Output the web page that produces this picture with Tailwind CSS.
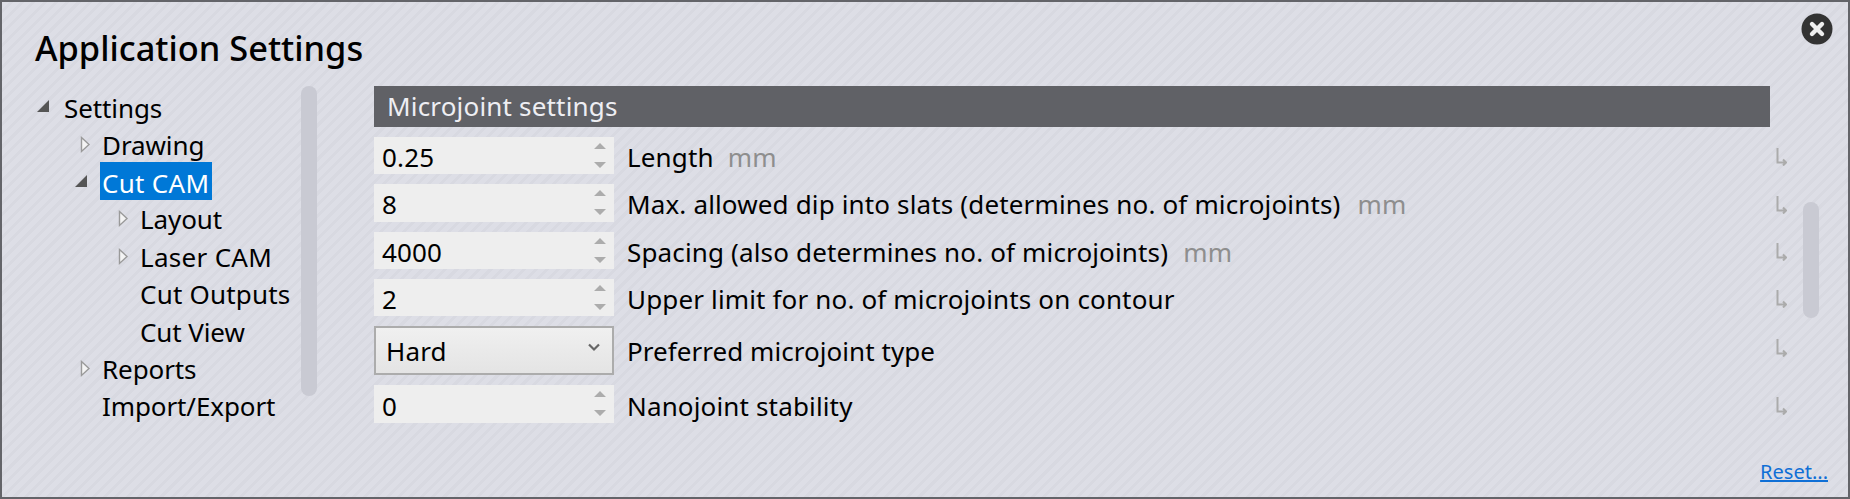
<!DOCTYPE html>
<html>
<head>
<meta charset="utf-8">
<script src="https://cdn.jsdelivr.net/npm/@tailwindcss/browser@4"></script>
</head>
<body class="m-0 overflow-hidden">
<div class="relative flex flex-col w-[1850px] h-[499px] border-2 border-[#636469] text-[26px] leading-[32px] text-black font-['Noto_Sans',sans-serif] bg-[#dddde5] bg-[repeating-linear-gradient(135deg,#dddee6_0px,#dddee6_5px,#d8d9e1_5px,#d8d9e1_8px)]">
  <div class="h-[84px] pl-[33px] pt-[24px] text-[34.4px] leading-[44px] font-medium">Application Settings</div>
  <button class="absolute top-[11px] right-[15px] w-[32px] h-[32px]">
    <svg width="32" height="32" viewBox="0 0 32 32"><circle cx="16" cy="16" r="15.5" fill="#333333"/><path d="M11 11 L21 21 M21 11 L11 21" stroke="#efefef" stroke-width="4.4" stroke-linecap="round"/></svg>
  </button>
  <div class="flex flex-1 items-start">
    <div class="w-[299px] pl-[35px] pt-[1.6px] tracking-[-0.1px]">
      <div class="flex items-center h-[37.4px]"><svg class="w-[25px] h-[38px]" viewBox="0 0 25 38"><path d="M12 13 V25 H0 Z" fill="#555"/></svg><span class="pl-[2px] pr-[4px] h-[38px] flex items-center pt-[3px]">Settings</span></div>
      <div class="flex items-center h-[37.4px] pl-[38px]"><svg class="w-[25px] h-[38px]" viewBox="0 0 25 38"><path d="M6.5 12.5 L14 19.5 L6.5 26.5 Z" fill="#f4f4f4" stroke="#9a9a9a" stroke-width="1.4"/></svg><span class="pl-[2px] pr-[4px] h-[38px] flex items-center pt-[3px]">Drawing</span></div>
      <div class="flex items-center h-[37.4px] pl-[38px]"><svg class="w-[25px] h-[38px]" viewBox="0 0 25 38"><path d="M12 13 V25 H0 Z" fill="#555"/></svg><span class="pl-[2px] pr-[3px] h-[38px] flex items-center pt-[3px] bg-[#0078d7] text-white tracking-[0.3px]">Cut CAM</span></div>
      <div class="flex items-center h-[37.4px] pl-[76px]"><svg class="w-[25px] h-[38px]" viewBox="0 0 25 38"><path d="M6.5 12.5 L14 19.5 L6.5 26.5 Z" fill="#f4f4f4" stroke="#9a9a9a" stroke-width="1.4"/></svg><span class="pl-[2px] pr-[4px] h-[38px] flex items-center pt-[2px]">Layout</span></div>
      <div class="flex items-center h-[37.4px] pl-[76px]"><svg class="w-[25px] h-[38px]" viewBox="0 0 25 38"><path d="M6.5 12.5 L14 19.5 L6.5 26.5 Z" fill="#f4f4f4" stroke="#9a9a9a" stroke-width="1.4"/></svg><span class="pl-[2px] pr-[4px] h-[38px] flex items-center pt-[2px] tracking-[0.3px]">Laser CAM</span></div>
      <div class="flex items-center h-[37.4px] pl-[101px]"><span class="pl-[2px] pr-[4px] h-[38px] flex items-center pt-[2px] tracking-[0.2px]">Cut Outputs</span></div>
      <div class="flex items-center h-[37.4px] pl-[101px]"><span class="pl-[2px] pr-[4px] h-[38px] flex items-center pt-[2px]">Cut View</span></div>
      <div class="flex items-center h-[37.4px] pl-[38px]"><svg class="w-[25px] h-[38px]" viewBox="0 0 25 38"><path d="M6.5 12.5 L14 19.5 L6.5 26.5 Z" fill="#f4f4f4" stroke="#9a9a9a" stroke-width="1.4"/></svg><span class="pl-[2px] pr-[4px] h-[38px] flex items-center pt-[2px]">Reports</span></div>
      <div class="flex items-center h-[37.4px] pl-[63px]"><span class="pl-[2px] pr-[4px] h-[38px] flex items-center pt-[2px]">Import/Export</span></div>
    </div>
    <div class="w-[16px] h-[310px] rounded-full bg-[#c9cad3]"></div>
    <div class="w-[1413px] ml-[57px] tracking-[0.15px]">
      <div class="w-[1396px] h-[41px] bg-[#606166] text-[#eeeef3] pl-[13px] pb-[2px] flex items-center mb-[10px] tracking-[0.18px]">Microjoint settings</div>
      <div class="flex items-center h-[37px] mb-[10px]">
        <div class="flex items-center justify-between w-[240px] h-full bg-[#eeeeee] pl-[8px] pr-[8px]"><span class="pt-[2px]">0.25</span><svg width="12" height="26" viewBox="0 0 12 26"><path d="M6 0 L12 6 H0 Z M0 19 H12 L6 25 Z" fill="#acacac"/></svg></div>
        <span class="ml-[13px] pt-[2px]">Length</span><span class="ml-[14px] pt-[2px] text-[#8e8e8e]">mm</span>
        <svg class="ml-auto mt-[3px]" width="11" height="18" viewBox="0 0 11 18"><path d="M1.5 0 V14.5 H9 M7 11.5 L10 14.5 L7 17.5" fill="none" stroke="#ababab" stroke-width="2"/></svg>
      </div>
      <div class="flex items-center h-[38px] mb-[10px]">
        <div class="flex items-center justify-between w-[240px] h-full bg-[#eeeeee] pl-[8px] pr-[8px]"><span class="pt-[2px]">8</span><svg width="12" height="26" viewBox="0 0 12 26"><path d="M6 0 L12 6 H0 Z M0 19 H12 L6 25 Z" fill="#acacac"/></svg></div>
        <span class="ml-[13px] pt-[2px]">Max. allowed dip into slats (determines no. of microjoints)</span><span class="ml-[17px] pt-[2px] text-[#8e8e8e]">mm</span>
        <svg class="ml-auto mt-[3px]" width="11" height="18" viewBox="0 0 11 18"><path d="M1.5 0 V14.5 H9 M7 11.5 L10 14.5 L7 17.5" fill="none" stroke="#ababab" stroke-width="2"/></svg>
      </div>
      <div class="flex items-center h-[37px] mb-[10px]">
        <div class="flex items-center justify-between w-[240px] h-full bg-[#eeeeee] pl-[8px] pr-[8px]"><span class="pt-[2px]">4000</span><svg width="12" height="26" viewBox="0 0 12 26"><path d="M6 0 L12 6 H0 Z M0 19 H12 L6 25 Z" fill="#acacac"/></svg></div>
        <span class="ml-[13px] pt-[2px]">Spacing (also determines no. of microjoints)</span><span class="ml-[15px] pt-[2px] text-[#8e8e8e]">mm</span>
        <svg class="ml-auto mt-[3px]" width="11" height="18" viewBox="0 0 11 18"><path d="M1.5 0 V14.5 H9 M7 11.5 L10 14.5 L7 17.5" fill="none" stroke="#ababab" stroke-width="2"/></svg>
      </div>
      <div class="flex items-center h-[37px] mb-[10px]">
        <div class="flex items-center justify-between w-[240px] h-full bg-[#eeeeee] pl-[8px] pr-[8px]"><span class="pt-[2px]">2</span><svg width="12" height="26" viewBox="0 0 12 26"><path d="M6 0 L12 6 H0 Z M0 19 H12 L6 25 Z" fill="#acacac"/></svg></div>
        <span class="ml-[13px] pt-[2px]">Upper limit for no. of microjoints on contour</span>
        <svg class="ml-auto mt-[3px]" width="11" height="18" viewBox="0 0 11 18"><path d="M1.5 0 V14.5 H9 M7 11.5 L10 14.5 L7 17.5" fill="none" stroke="#ababab" stroke-width="2"/></svg>
      </div>
      <div class="flex items-center h-[49px] mb-[10px]">
        <div class="flex items-center justify-between w-[240px] h-full border-2 border-[#acacac] bg-gradient-to-b from-[#f0f0f0] to-[#e4e4e4] pl-[10px] pr-[12px]"><span>Hard</span><svg class="mb-[6px]" width="12" height="9" viewBox="0 0 12 9"><path d="M1 1.5 L6 6.5 L11 1.5" fill="none" stroke="#666" stroke-width="2.2"/></svg></div>
        <span class="ml-[13px] tracking-[0.05px]">Preferred microjoint type</span>
        <svg class="ml-auto mb-[6px]" width="11" height="18" viewBox="0 0 11 18"><path d="M1.5 0 V14.5 H9 M7 11.5 L10 14.5 L7 17.5" fill="none" stroke="#ababab" stroke-width="2"/></svg>
      </div>
      <div class="flex items-center h-[38px]">
        <div class="flex items-center justify-between w-[240px] h-full bg-[#eeeeee] pl-[8px] pr-[8px]"><span class="pt-[3px]">0</span><svg width="12" height="26" viewBox="0 0 12 26"><path d="M6 0 L12 6 H0 Z M0 19 H12 L6 25 Z" fill="#acacac"/></svg></div>
        <span class="ml-[13px] pt-[3px]">Nanojoint stability</span>
        <svg class="ml-auto mt-[3px]" width="11" height="18" viewBox="0 0 11 18"><path d="M1.5 0 V14.5 H9 M7 11.5 L10 14.5 L7 17.5" fill="none" stroke="#ababab" stroke-width="2"/></svg>
      </div>
    </div>
    <div class="w-[16px] h-[116px] ml-[16px] mt-[116px] rounded-full bg-[#c9cad3]"></div>
  </div>
  <div class="flex justify-end pr-[20px] pb-[11px]"><a class="text-[20px] leading-[28px] text-[#0f6fd6] underline">Reset...</a></div>
</div>
</body>
</html>
